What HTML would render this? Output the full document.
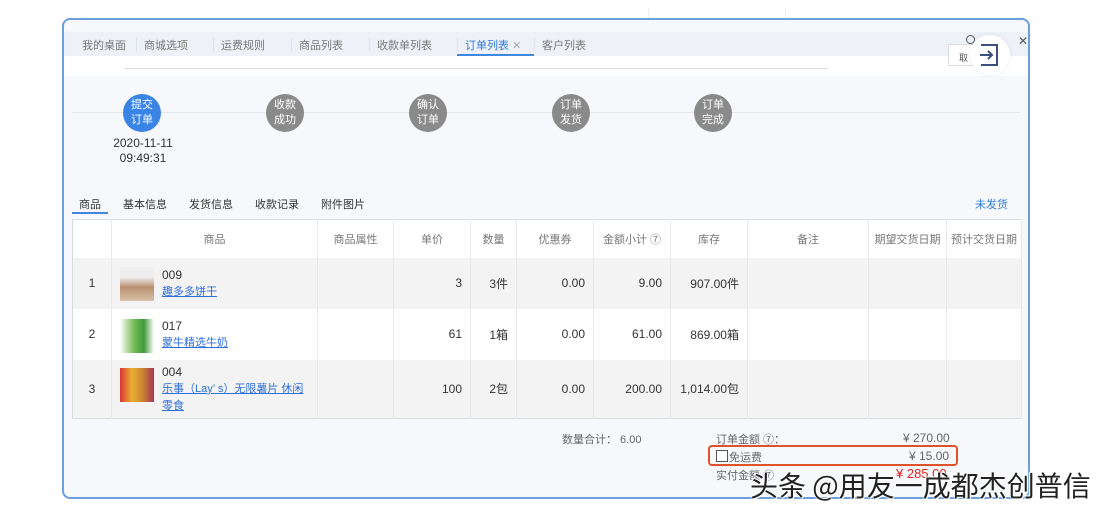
<!DOCTYPE html>
<html><head><meta charset="utf-8"><style>
*{margin:0;padding:0;box-sizing:border-box}
body{width:1106px;height:516px;background:#fff;position:relative;overflow:hidden;font-family:"Liberation Sans","Noto Sans CJK SC",sans-serif;font-size:11px;color:#333}
.a{position:absolute}
#frame{left:62px;top:18px;width:968px;height:481px;border:2px solid #6d9fdc;border-radius:8px;background:#f7f8fb;overflow:hidden}
.tab{position:absolute;top:37px;color:#777;font-size:11px}
.sep{position:absolute;top:38px;width:1px;height:13px;background:#dde3ec}
.circ{position:absolute;width:38px;height:38px;border-radius:50%;background:#8a8a8a;color:#fff;font-size:11px;line-height:15px;text-align:center;padding-top:4px}
table{border-collapse:collapse;position:absolute;left:72px;top:219px;width:950px;border:1px solid #d8dbe0;font-size:12px}
th{font-size:11px}
td,th{border-right:1px solid #e6e8ec;font-weight:normal}
th{height:38px;background:#fff;color:#777}
tr.g td{background:#f3f3f3}
tr.w td{background:#fff}
td.r{text-align:right;padding-right:8px}
a{color:#2f6fd8;text-decoration:underline;font-size:11px}
.img{position:absolute;width:34px;height:34px}
</style></head><body>
<div class="a" style="left:648px;top:8px;width:138px;height:14px;border:1px solid #eee;border-top:none;border-radius:0 0 4px 4px"></div>
<div id="frame" class="a"></div>
<div class="a" style="left:64px;top:32px;width:964px;height:24px;background:#eef2f8"></div>
<div class="a" style="left:64px;top:56px;width:964px;height:20px;background:#fff"></div>
<div class="a" style="left:125px;top:68px;width:703px;height:1px;background:#ddd"></div>
<span class="tab" style="left:82px">我的桌面</span><div class="sep" style="left:136px"></div>
<span class="tab" style="left:144px">商城选项</span><div class="sep" style="left:213px"></div>
<span class="tab" style="left:221px">运费规则</span><div class="sep" style="left:291px"></div>
<span class="tab" style="left:299px">商品列表</span><div class="sep" style="left:369px"></div>
<span class="tab" style="left:377px">收款单列表</span><div class="sep" style="left:457px"></div>
<span class="tab" style="left:465px;color:#2f7be0">订单列表 <span style="color:#aaa">✕</span></span>
<div class="a" style="left:457px;top:54px;width:77px;height:2px;background:#3f87e0"></div>
<div class="sep" style="left:534px"></div>
<span class="tab" style="left:542px">客户列表</span>
<div class="a" style="left:948px;top:44px;width:30px;height:22px;border:1px solid #ddd;background:#fff;font-size:9px;color:#555;padding:6px 0 0 10px">取</div>
<div class="a" style="left:966px;top:35px;width:9px;height:9px;border:1.5px solid #555;border-radius:50%"></div>
<div class="a" style="left:1018px;top:34px;color:#555;font-size:12px">✕</div>
<div class="a" style="left:970px;top:35px;width:40px;height:40px;border-radius:50%;background:#fff;box-shadow:0 0 4px rgba(0,0,0,.08)"></div>
<svg class="a" style="left:978px;top:42px" width="24" height="26" viewBox="0 0 24 26"><path d="M3 3H19V23H3M2 13H14M10 9L14 13L10 17" fill="none" stroke="#3b4f80" stroke-width="2"/></svg>
<div class="a" style="left:72px;top:112px;width:948px;height:1px;background:#e3e5e9"></div>
<div class="circ" style="left:123px;top:94px;background:#3a84e6">提交<br>订单</div>
<div class="circ" style="left:266px;top:94px">收款<br>成功</div>
<div class="circ" style="left:409px;top:94px">确认<br>订单</div>
<div class="circ" style="left:552px;top:94px">订单<br>发货</div>
<div class="circ" style="left:694px;top:94px">订单<br>完成</div>
<div class="a" style="left:104px;top:136px;width:78px;text-align:center;font-size:12px;line-height:15px">2020-11-11<br>09:49:31</div>
<span class="a" style="left:79px;top:196px">商品</span>
<div class="a" style="left:72px;top:212px;width:36px;height:2px;background:#3f87e0"></div>
<span class="a" style="left:123px;top:196px">基本信息</span>
<span class="a" style="left:189px;top:196px">发货信息</span>
<span class="a" style="left:255px;top:196px">收款记录</span>
<span class="a" style="left:321px;top:196px">附件图片</span>
<span class="a" style="left:975px;top:196px;color:#2f7be0">未发货</span>
<table>
<colgroup><col style="width:39px"><col style="width:206px"><col style="width:76px"><col style="width:77px"><col style="width:46px"><col style="width:77px"><col style="width:77px"><col style="width:77px"><col style="width:121px"><col style="width:78px"><col></colgroup>
<tr><th></th><th>商品</th><th>商品属性</th><th>单价</th><th>数量</th><th>优惠券</th><th>金额小计 ⑦</th><th>库存</th><th>备注</th><th>期望交货日期</th><th>预计交货日期</th></tr>
<tr class="g" style="height:51px"><td style="text-align:center">1</td><td style="position:relative;padding-left:50px;line-height:16px"><div class="img" style="left:8px;top:9px;background:linear-gradient(#eee 30%,#b89070 60%,#d9c2a8)"></div>009<br><a>趣多多饼干</a></td><td></td><td class="r">3</td><td class="r">3件</td><td class="r">0.00</td><td class="r">9.00</td><td class="r">907.00件</td><td></td><td></td><td></td></tr>
<tr class="w" style="height:51px"><td style="text-align:center">2</td><td style="position:relative;padding-left:50px;line-height:16px"><div class="img" style="left:8px;top:10px;background:linear-gradient(90deg,#fff,#7bbd5a 40%,#3f9a3a 70%,#fff)"></div>017<br><a>蒙牛精选牛奶</a></td><td></td><td class="r">61</td><td class="r">1箱</td><td class="r">0.00</td><td class="r">61.00</td><td class="r">869.00箱</td><td></td><td></td><td></td></tr>
<tr class="g" style="height:59px"><td style="text-align:center">3</td><td style="position:relative;padding-left:50px;line-height:16px"><div class="img" style="left:8px;top:8px;background:linear-gradient(90deg,#d33 0,#e8b030 35%,#c83 65%,#a35 100%)"></div>004<br><a>乐事（Lay’ s）无限薯片 休闲<br>零食</a></td><td></td><td class="r">100</td><td class="r">2包</td><td class="r">0.00</td><td class="r">200.00</td><td class="r">1,014.00包</td><td></td><td></td><td></td></tr>
</table>
<span class="a" style="left:562px;top:431px;color:#666">数量合计： 6.00</span>
<span class="a" style="left:716px;top:431px;color:#666">订单金额 ⑦：</span>
<span class="a" style="left:903px;top:431px;color:#666;font-size:12px">¥ 270.00</span>
<div class="a" style="left:708px;top:445px;width:250px;height:21px;border:2px solid #e0522a;border-radius:4px"></div>
<div class="a" style="left:716px;top:450px;width:12px;height:12px;border:1px solid #555;background:#fff"></div>
<span class="a" style="left:729px;top:449px;color:#666">免运费</span>
<span class="a" style="left:909px;top:449px;color:#666;font-size:12px">¥ 15.00</span>
<span class="a" style="left:716px;top:467px;color:#666">实付金额 ⑦</span>
<span class="a" style="left:896px;top:466px;color:#e02020;font-size:13px">¥ 285.00</span>
<div class="a" style="left:750px;top:469px;font-size:28px;color:#222;text-shadow:0 0 2px #fff,0 0 2px #fff,1px 1px 0 #fff,-1px -1px 0 #fff;font-family:'Noto Sans CJK SC',sans-serif;line-height:32px;white-space:nowrap">头条 @用友一成都杰创普信</div>
</body></html>
